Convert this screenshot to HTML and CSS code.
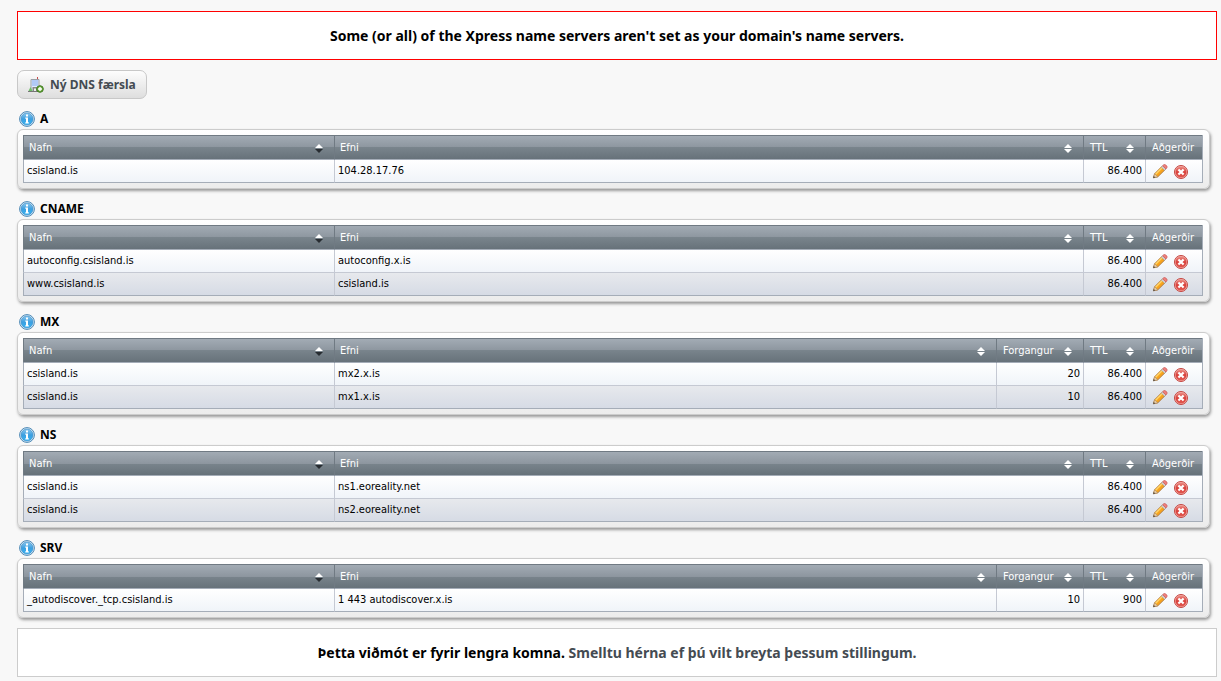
FILE: index.html
```
<!DOCTYPE html>
<html lang="is">
<head>
<meta charset="utf-8">
<title>DNS</title>
<link rel="stylesheet" href="styles.css">
</head>
<body>
<svg class="sprite" aria-hidden="true">
  <defs>
    <linearGradient id="blue" x1="0" y1="0" x2="0" y2="1"><stop offset="0" stop-color="#8cc8ee"/><stop offset=".5" stop-color="#3c9fe0"/><stop offset="1" stop-color="#36b4f4"/></linearGradient>
    <linearGradient id="red" x1="0" y1="0" x2="0" y2="1"><stop offset="0" stop-color="#ec8d85"/><stop offset=".5" stop-color="#d9413c"/><stop offset="1" stop-color="#e25850"/></linearGradient>
    <symbol id="info" viewBox="0 0 16 16">
      <circle cx="8" cy="8" r="7.4" fill="#e4f1fa" stroke="#4a87b4"/>
      <circle cx="8" cy="8" r="6" fill="url(#blue)" stroke="#3d8fca" stroke-width=".7"/>
      <path d="M7 3.6h2v2H7zM6.3 6.6H9v4.6h.8v1.2H6.3v-1.2H7V7.8h-.7z" fill="#fff"/>
    </symbol>
    <symbol id="edit" viewBox="0 0 16 16">
      <path d="M1.4 13.8 2.6 9.8 10.3 2.1 13.7 5.1 5.8 12.8Z" fill="#f8a31c" stroke="#a9733a" stroke-width=".9"/>
      <path d="M3.6 10.2 10.5 3.3" stroke="#ffd66b" stroke-width="1.5"/>
      <path d="M1.4 13.8 2.6 9.8 5.8 12.8Z" fill="#ecd0a4" stroke="#a98760" stroke-width=".6"/>
      <path d="M1.2 14 1.8 12 3.2 13.4Z" fill="#444"/>
      <path d="M9.3 3.1 10.6 1.8 14 5 12.6 6.3Z" fill="#d5d8dc" stroke="#999" stroke-width=".5"/>
      <path d="M10.6 1.8 11.8.7Q12.8.1 13.7.9L14.8 2.1Q15.4 2.9 14.9 3.8L13.9 5Z" fill="#ef7f7b" stroke="#c85853" stroke-width=".7"/>
    </symbol>
    <symbol id="delete" viewBox="0 0 16 16">
      <circle cx="8" cy="8" r="6.5" fill="#f6b5af" stroke="#c4443f"/>
      <circle cx="8" cy="8" r="5.5" fill="url(#red)"/>
      <path d="M6.2 6.2 9.8 9.8M9.8 6.2 6.2 9.8" stroke="#fff" stroke-width="2.2" stroke-linecap="square"/>
    </symbol>
    <symbol id="sort" viewBox="0 0 8 9">
      <path d="M4 0 8 4H0Z" fill="#fff"/><path d="M0 5H8L4 9Z" fill="currentColor"/>
    </symbol>
    <symbol id="server" viewBox="0 0 16 16">
      <path d="M9.5 0V3" stroke="#c94b4b"/>
      <path d="M3 14V2.5h8V14" fill="#dfeaff" stroke="#9a9fa6"/>
      <path d="M4 4h6M4 6h6M4 8h6" stroke="#83a9ee"/>
      <path d="M4.5 14v-4h5v4z" fill="#8a8a8a"/>
      <path d="M6 14v-2.5h2V14z" fill="#eee"/>
      <path d="M0 14.5h12" stroke="#777"/>
      <path d="M.5 14 2.5 10 4.5 14Z" fill="#6fbf68"/>
      <circle cx="12" cy="12" r="3.3" fill="#6daa3d" stroke="#3f7a24"/>
      <path d="M12 10v4M10 12h4" stroke="#fff" stroke-width="1.4"/>
    </symbol>
  </defs>
</svg>
<main class="page">
  <p class="notice notice-error">Some (or all) of the Xpress name servers aren't set as your domain's name servers.</p>
  <button class="new-record" type="button"><svg class="icon"><use href="#server"/></svg>Ný DNS færsla</button>

  <section>
    <h2 class="type"><svg class="icon"><use href="#info"/></svg>A</h2>
    <div class="panel">
      <table class="records">
        <thead><tr>
          <th class="name"><button class="sort active" type="button">Nafn<svg><use href="#sort"/></svg></button></th>
          <th><button class="sort" type="button">Efni<svg><use href="#sort"/></svg></button></th>
          <th class="ttl"><button class="sort" type="button">TTL<svg><use href="#sort"/></svg></button></th>
          <th class="actions">Aðgerðir</th>
        </tr></thead>
        <tbody>
          <tr><td>csisland.is</td><td>104.28.17.76</td><td class="num">86.400</td><td class="tools"><div><button type="button" aria-label="Breyta"><svg class="icon"><use href="#edit"/></svg></button><button type="button" aria-label="Eyða"><svg class="icon"><use href="#delete"/></svg></button></div></td></tr>
        </tbody>
      </table>
    </div>
  </section>

  <section>
    <h2 class="type"><svg class="icon"><use href="#info"/></svg>CNAME</h2>
    <div class="panel">
      <table class="records">
        <thead><tr>
          <th class="name"><button class="sort active" type="button">Nafn<svg><use href="#sort"/></svg></button></th>
          <th><button class="sort" type="button">Efni<svg><use href="#sort"/></svg></button></th>
          <th class="ttl"><button class="sort" type="button">TTL<svg><use href="#sort"/></svg></button></th>
          <th class="actions">Aðgerðir</th>
        </tr></thead>
        <tbody>
          <tr><td>autoconfig.csisland.is</td><td>autoconfig.x.is</td><td class="num">86.400</td><td class="tools"><div><button type="button" aria-label="Breyta"><svg class="icon"><use href="#edit"/></svg></button><button type="button" aria-label="Eyða"><svg class="icon"><use href="#delete"/></svg></button></div></td></tr>
          <tr><td>www.csisland.is</td><td>csisland.is</td><td class="num">86.400</td><td class="tools"><div><button type="button" aria-label="Breyta"><svg class="icon"><use href="#edit"/></svg></button><button type="button" aria-label="Eyða"><svg class="icon"><use href="#delete"/></svg></button></div></td></tr>
        </tbody>
      </table>
    </div>
  </section>

  <section>
    <h2 class="type"><svg class="icon"><use href="#info"/></svg>MX</h2>
    <div class="panel">
      <table class="records">
        <thead><tr>
          <th class="name"><button class="sort active" type="button">Nafn<svg><use href="#sort"/></svg></button></th>
          <th><button class="sort" type="button">Efni<svg><use href="#sort"/></svg></button></th>
          <th class="priority"><button class="sort" type="button">Forgangur<svg><use href="#sort"/></svg></button></th>
          <th class="ttl"><button class="sort" type="button">TTL<svg><use href="#sort"/></svg></button></th>
          <th class="actions">Aðgerðir</th>
        </tr></thead>
        <tbody>
          <tr><td>csisland.is</td><td>mx2.x.is</td><td class="num">20</td><td class="num">86.400</td><td class="tools"><div><button type="button" aria-label="Breyta"><svg class="icon"><use href="#edit"/></svg></button><button type="button" aria-label="Eyða"><svg class="icon"><use href="#delete"/></svg></button></div></td></tr>
          <tr><td>csisland.is</td><td>mx1.x.is</td><td class="num">10</td><td class="num">86.400</td><td class="tools"><div><button type="button" aria-label="Breyta"><svg class="icon"><use href="#edit"/></svg></button><button type="button" aria-label="Eyða"><svg class="icon"><use href="#delete"/></svg></button></div></td></tr>
        </tbody>
      </table>
    </div>
  </section>

  <section>
    <h2 class="type"><svg class="icon"><use href="#info"/></svg>NS</h2>
    <div class="panel">
      <table class="records">
        <thead><tr>
          <th class="name"><button class="sort active" type="button">Nafn<svg><use href="#sort"/></svg></button></th>
          <th><button class="sort" type="button">Efni<svg><use href="#sort"/></svg></button></th>
          <th class="ttl"><button class="sort" type="button">TTL<svg><use href="#sort"/></svg></button></th>
          <th class="actions">Aðgerðir</th>
        </tr></thead>
        <tbody>
          <tr><td>csisland.is</td><td>ns1.eoreality.net</td><td class="num">86.400</td><td class="tools"><div><button type="button" aria-label="Breyta"><svg class="icon"><use href="#edit"/></svg></button><button type="button" aria-label="Eyða"><svg class="icon"><use href="#delete"/></svg></button></div></td></tr>
          <tr><td>csisland.is</td><td>ns2.eoreality.net</td><td class="num">86.400</td><td class="tools"><div><button type="button" aria-label="Breyta"><svg class="icon"><use href="#edit"/></svg></button><button type="button" aria-label="Eyða"><svg class="icon"><use href="#delete"/></svg></button></div></td></tr>
        </tbody>
      </table>
    </div>
  </section>

  <section>
    <h2 class="type"><svg class="icon"><use href="#info"/></svg>SRV</h2>
    <div class="panel">
      <table class="records">
        <thead><tr>
          <th class="name"><button class="sort active" type="button">Nafn<svg><use href="#sort"/></svg></button></th>
          <th><button class="sort" type="button">Efni<svg><use href="#sort"/></svg></button></th>
          <th class="priority"><button class="sort" type="button">Forgangur<svg><use href="#sort"/></svg></button></th>
          <th class="ttl"><button class="sort" type="button">TTL<svg><use href="#sort"/></svg></button></th>
          <th class="actions">Aðgerðir</th>
        </tr></thead>
        <tbody>
          <tr><td>_autodiscover._tcp.csisland.is</td><td>1 443 autodiscover.x.is</td><td class="num">10</td><td class="num">900</td><td class="tools"><div><button type="button" aria-label="Breyta"><svg class="icon"><use href="#edit"/></svg></button><button type="button" aria-label="Eyða"><svg class="icon"><use href="#delete"/></svg></button></div></td></tr>
        </tbody>
      </table>
    </div>
  </section>

  <p class="notice notice-foot">Þetta viðmót er fyrir lengra komna. <a href="#">Smelltu hérna ef þú vilt breyta þessum stillingum.</a></p>
</main>
</body>
</html>
```
FILE: styles.css
```
* {
  box-sizing: border-box;
}

body {
  margin: 0;
  background: #f8f8f8;
  color: #000;
  font: 11px/14px "DejaVu Sans Condensed", "Noto Sans", sans-serif;
}

button {
  margin: 0;
  padding: 0;
  border: 0;
  background: none;
  color: inherit;
  font: inherit;
  cursor: pointer;
}

.sprite {
  position: absolute;
  width: 0;
  height: 0;
}

.icon {
  display: block;
  flex: none;
  width: 16px;
  height: 16px;
}

.page {
  padding: 11px 4px 4px 17px;
}

.notice {
  margin: 0;
  padding: 14px;
  border: 1px solid #ccc;
  background: #fff;
  font: bold 14px/19px "Noto Sans", sans-serif;
  text-align: center;
}

.notice a {
  color: #444b52;
  text-decoration: none;
}

.notice-error {
  border-color: #f00;
}

.notice-foot {
  margin-top: 10px;
}

.new-record {
  display: flex;
  align-items: center;
  gap: 6px;
  margin-top: 10px;
  padding: 0 10px;
  height: 29px;
  border: 1px solid #c8c8c8;
  border-radius: 7px;
  background: linear-gradient(#fdfdfd, #dedede);
  color: #444b52;
  font: bold 12px/16px "Noto Sans", sans-serif;
}

.type {
  display: flex;
  align-items: center;
  gap: 5px;
  margin: 0;
  padding: 12px 2px 2px;
  font: bold 12px/16px "Noto Sans", sans-serif;
}

.panel {
  margin-right: 7px;
  padding: 5px 6px 5px 5px;
  border: 1px solid #ccc;
  border-radius: 6px;
  background: linear-gradient(#fff, #ececec);
  box-shadow: 1px 2px 3px #999;
}

.records {
  width: 100%;
  table-layout: fixed;
  border-collapse: separate;
  border-spacing: 0;
  border-right: 1px solid #a5adb8;
}

th {
  height: 25px;
  padding: 1px 5px 0;
  border: 1px solid #707a83;
  border-width: 1px 0 1px 1px;
  border-bottom-color: #a5adb8;
  background: linear-gradient(#a2abb4, #8d969f 50%, #79848c 50%, #67727a);
  color: #fff;
  text-align: left;
  font-weight: normal;
}

.name {
  width: 311px;
}

.priority {
  width: 87px;
  padding-left: 6px;
}

.ttl {
  width: 62px;
  padding-left: 6px;
}

.actions {
  width: 57px;
  padding: 1px 0 0 6px;
}

.sort {
  display: flex;
  align-items: center;
  justify-content: space-between;
  width: 100%;
  padding-right: 6px;
}

.sort svg {
  width: 8px;
  height: 9px;
}

.sort.active svg {
  color: #272c31;
}

td {
  height: 23px;
  padding: 0 3px;
  border: 1px solid #c5c9d3;
  border-width: 0 0 1px 1px;
  background: linear-gradient(#fff, #f0f4f9);
}

tr:nth-child(even) td {
  background: linear-gradient(#e7e9ed, #d6dbe5);
}

tr:last-child td {
  border-bottom-color: #a5adb8;
}

td:first-child {
  border-left-color: #a5adb8;
}

.num {
  text-align: right;
}

td.tools {
  padding: 2px 6px 0;
}

.tools div {
  display: flex;
  gap: 5px;
}
```
